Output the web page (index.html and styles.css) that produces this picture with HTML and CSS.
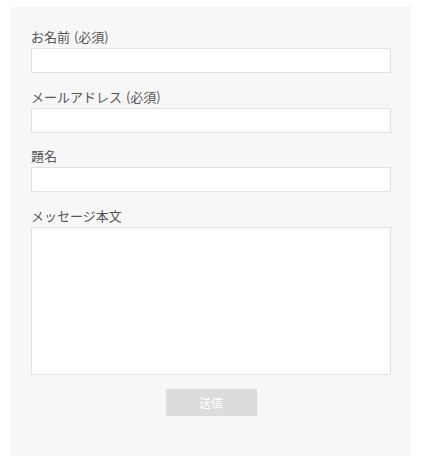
FILE: index.html
```html
<!DOCTYPE html>
<html lang="ja">
<head>
    <meta charset="UTF-8">
    <meta name="viewport" content="width=device-width, initial-scale=1.0">
    <title>お問い合わせ</title>
    <link rel="stylesheet" href="styles.css">
</head>
<body>
    <div class="contact">
        <form class="contact-form">
            <div class="field">
                <label for="name">お名前 (必須)</label>
                <input type="text" id="name" class="input">
            </div>
            <div class="field">
                <label for="email">メールアドレス (必須)</label>
                <input type="email" id="email" class="input">
            </div>
            <div class="field">
                <label for="subject">題名</label>
                <input type="text" id="subject" class="input">
            </div>
            <div class="field">
                <label for="message">メッセージ本文</label>
                <textarea id="message" class="input textarea"></textarea>
            </div>
            <div class="actions">
                <button type="submit" class="submit">送信</button>
            </div>
        </form>
    </div>
</body>
</html>
```

FILE: styles.css
```css
body {
    margin: 0;
    padding: 7px 0 0 11px;
    background: #fff;
    font-family: "Noto Sans CJK JP", "Noto Sans", sans-serif;
    color: #555;
}
.contact {
    width: 400px;
    height: 449px;
    box-sizing: border-box;
    padding: 21px 20px 0 20px;
    background: #f7f7f7;
}
.contact-form {
    display: flex;
    flex-direction: column;
    gap: 14.5px;
}
.field {
    display: flex;
    flex-direction: column;
    gap: 2px;
}
.field label {
    font-size: 13px;
    line-height: 18px;
    word-spacing: 1px;
}
.input {
    box-sizing: border-box;
    width: 360px;
    height: 25px;
    margin: 0;
    padding: 2px 6px;
    background: #fff;
    border: 1px solid #e2e2e2;
    border-radius: 0;
    box-shadow: inset 0 0 1px rgba(0, 0, 0, 0.06);
    font-family: inherit;
    font-size: 13px;
}
.textarea {
    height: 148px;
    resize: none;
}
.actions {
    display: flex;
    justify-content: center;
}
.submit {
    width: 91px;
    height: 27px;
    background: #dcdcdc;
    color: #fff;
    border: none;
    border-radius: 0;
    font-family: inherit;
    font-size: 12px;
    cursor: pointer;
}
```
